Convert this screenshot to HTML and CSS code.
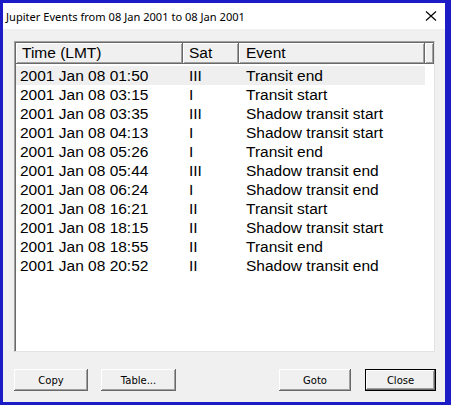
FILE: index.html
```html
<!DOCTYPE html>
<html>
<head>
<meta charset="utf-8">
<link rel="stylesheet" href="styles.css">
</head>
<body>
<div class="window">
  <div class="titlebar">
    <span class="title">Jupiter Events from 08 Jan 2001 to 08 Jan 2001</span>
    <svg class="close" width="12" height="12" viewBox="0 0 12 12"><path d="M1 1.5 L11 10.5 M11 1.5 L1 10.5" stroke="#000" stroke-width="1.1" fill="none"/></svg>
  </div>
  <div class="client">
    <div class="listview">
      <div class="header">
        <div class="hcell c1">Time (LMT)</div>
        <div class="hcell c2">Sat</div>
        <div class="hcell c3">Event</div>
        <div class="hcell c4"></div>
      </div>
      <div class="rows">
        <div class="row sel"><div class="cell c1">2001 Jan 08 01:50</div><div class="cell c2">III</div><div class="cell c3">Transit end</div></div>
        <div class="row"><div class="cell c1">2001 Jan 08 03:15</div><div class="cell c2">I</div><div class="cell c3">Transit start</div></div>
        <div class="row"><div class="cell c1">2001 Jan 08 03:35</div><div class="cell c2">III</div><div class="cell c3">Shadow transit start</div></div>
        <div class="row"><div class="cell c1">2001 Jan 08 04:13</div><div class="cell c2">I</div><div class="cell c3">Shadow transit start</div></div>
        <div class="row"><div class="cell c1">2001 Jan 08 05:26</div><div class="cell c2">I</div><div class="cell c3">Transit end</div></div>
        <div class="row"><div class="cell c1">2001 Jan 08 05:44</div><div class="cell c2">III</div><div class="cell c3">Shadow transit end</div></div>
        <div class="row"><div class="cell c1">2001 Jan 08 06:24</div><div class="cell c2">I</div><div class="cell c3">Shadow transit end</div></div>
        <div class="row"><div class="cell c1">2001 Jan 08 16:21</div><div class="cell c2">II</div><div class="cell c3">Transit start</div></div>
        <div class="row"><div class="cell c1">2001 Jan 08 18:15</div><div class="cell c2">II</div><div class="cell c3">Shadow transit start</div></div>
        <div class="row"><div class="cell c1">2001 Jan 08 18:55</div><div class="cell c2">II</div><div class="cell c3">Transit end</div></div>
        <div class="row"><div class="cell c1">2001 Jan 08 20:52</div><div class="cell c2">II</div><div class="cell c3">Shadow transit end</div></div>
      </div>
    </div>
    <div class="buttons">
      <button class="btn b-copy">Copy</button>
      <button class="btn b-table">Table...</button>
      <span class="spacer"></span>
      <button class="btn b-goto">Goto</button>
      <button class="btn b-close default">Close</button>
    </div>
  </div>
</div>
</body>
</html>
```
FILE: styles.css
```css
html, body {
  margin: 0;
  padding: 0;
}
body {
  width: 451px;
  height: 405px;
  background: #1c1cc6;
  overflow: hidden;
}
.window {
  margin: 3px 6px 0 3px;
  width: 442px;
  height: 399px;
  background: #f0f0f0;
  display: flex;
  flex-direction: column;
}
.titlebar {
  height: 26px;
  background: #ffffff;
  display: flex;
  align-items: center;
  padding-left: 3px;
  padding-right: 8px;
  font-family: "Noto Sans", sans-serif;
  font-size: 11.1px;
  color: #000;
}
.title {
  flex: 1;
  white-space: nowrap;
}
.close {
  display: block;
}
.client {
  flex: 1;
  padding: 12px 0 0 11px;
}
.listview {
  width: 421px;
  height: 311px;
  box-sizing: border-box;
  background: #fff;
  border-top: 1px solid #a0a0a0;
  border-left: 1px solid #a0a0a0;
  border-right: 1px solid #e3e3e3;
  border-bottom: 1px solid #e3e3e3;
  box-shadow: inset 1px 1px 0 #696969;
  padding: 1px 0 0 1px;
  font-family: "Liberation Sans", Arial, sans-serif;
  font-size: 15.5px;
  color: #000;
}
.header {
  display: flex;
  height: 21px;
}
.hcell {
  box-sizing: border-box;
  background: #f0f0f0;
  border-right: 1px solid #696969;
  border-bottom: 1px solid #696969;
  box-shadow: inset 1px 1px 0 #fff, inset -1px -1px 0 #a0a0a0;
  line-height: 20px;
  white-space: nowrap;
  overflow: hidden;
}
.header .c1 { width: 167px; padding-left: 6px; }
.header .c2 { width: 56px; padding-left: 6px; }
.header .c3 { width: 186px; padding-left: 7px; }
.header .c4 { width: 9px; }
.rows {
  padding-top: 2px;
}
.row {
  display: flex;
  height: 19px;
  line-height: 19px;
  width: 409px;
}
.row.sel {
  background: #efefef;
}
.cell {
  box-sizing: border-box;
  white-space: nowrap;
}
.row .c1 { width: 167px; padding-left: 4px; }
.row .c2 { width: 56px; padding-left: 6px; }
.row .c3 { width: 186px; padding-left: 7px; }
.buttons {
  display: flex;
  margin-top: 17px;
  height: 22px;
}
.spacer { flex: 1; }
.btn {
  height: 22px;
  margin: 0;
  padding: 0;
  box-sizing: border-box;
  background: #f0f0f0;
  border: none;
  box-shadow: inset -1px -1px 0 #696969, inset 1px 1px 0 #fff, inset -2px -2px 0 #a0a0a0;
  font-family: "DejaVu Sans", sans-serif;
  font-size: 10px;
  color: #000;
}
.b-copy { width: 74px; }
.b-table { width: 75px; margin-left: 13px; }
.b-goto { width: 72px; }
.b-close { width: 71px; margin-left: 14px; margin-right: 9px; }
.btn.default {
  box-shadow: inset 0 0 0 1px #000, inset -2px -2px 0 #696969, inset 2px 2px 0 #fff, inset -3px -3px 0 #a0a0a0;
}
```
